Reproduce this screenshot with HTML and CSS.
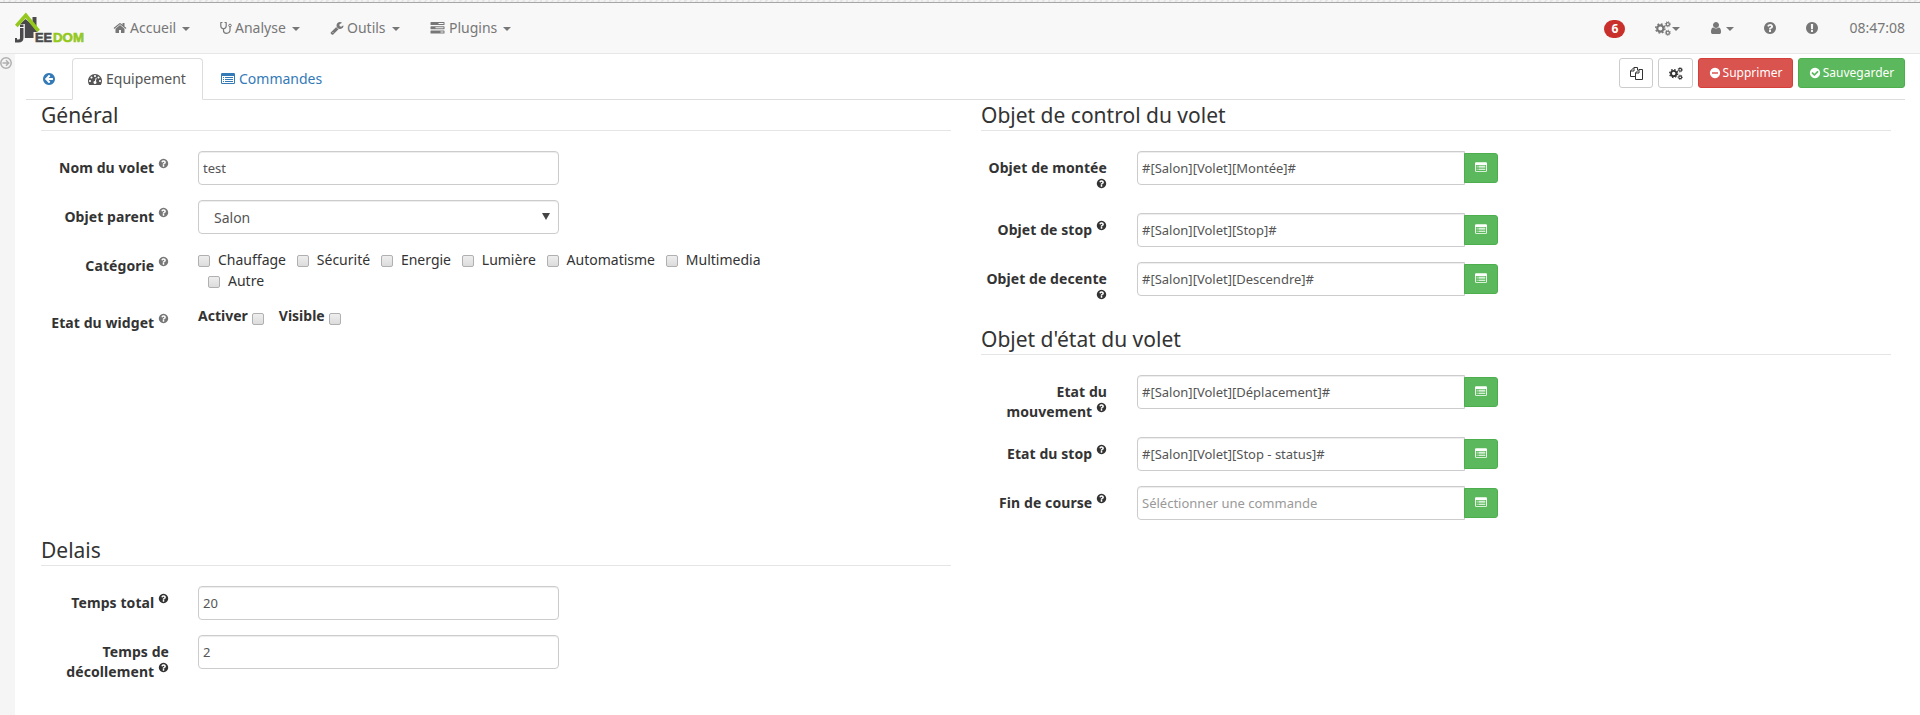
FILE: index.html
```html
<!DOCTYPE html>
<html lang="fr">
<head>
<meta charset="utf-8">
<title>Jeedom</title>
<link rel="stylesheet" href="styles.css">
</head>
<body>
<svg width="0" height="0" class="defs">
  <symbol id="home" viewBox="0 0 1792 1792"><path d="M1472 992v480q0 26-19 45t-45 19h-384v-384h-256v384h-384q-26 0-45-19t-19-45v-480q0-1 .5-3t.5-3l575-474 575 474q1 2 1 6zm223-69l-62 74q-8 9-21 11h-3q-13 0-21-7l-692-577-692 577q-12 8-24 7-13-2-21-11l-62-74q-8-10-7-23.5t11-21.5l719-599q32-26 76-26t76 26l244 204v-195q0-14 9-23t23-9h192q14 0 23 9t9 23v408l219 182q10 8 11 21.5t-7 23.5z"/></symbol>
  <symbol id="user" viewBox="0 0 1792 1792"><path d="M1536 1399q0 109-62.5 187t-150.5 78h-854q-88 0-150.5-78t-62.5-187q0-85 8.5-160.5t31.5-152 58.5-131 94-89 134.500-34.500q131 128 313 128t313-128q76 0 134.500 34.500t94 89 58.500 131 31.500 152 8.500 160.500zm-256-887q0 159-112.500 271.500t-271.500 112.500-271.500-112.500-112.500-271.500 112.500-271.500 271.500-112.500 271.500 112.500 112.500 271.500z"/></symbol>
  <symbol id="question" viewBox="0 0 1792 1792"><path d="M1024 1376v-192q0-14-9-23t-23-9h-192q-14 0-23 9t-9 23v192q0 14 9 23t23 9h192q14 0 23-9t9-23zm256-672q0-88-55.5-163t-138.500-116-170-41q-243 0-371 213-15 24 8 42l132 100q7 6 19 6 16 0 25-12 53-68 86-92 34-24 86-24 48 0 85.500 26t37.500 59q0 38-20 61t-68 45q-63 28-115.500 86.500t-52.500 125.500v36q0 14 9 23t23 9h192q14 0 23-9t9-23q0-19 21.500-49.500t54.500-49.500q32-18 49-28.500t46-35 44.500-48 28-60.500 12.500-81zm384 192q0 209-103 385.500t-279.500 279.500-385.500 103-385.500-103-279.500-279.500-103-385.500 103-385.500 279.500-279.500 385.500-103 385.500 103 279.500 279.500 103 385.500z"/></symbol>
  <symbol id="exclamation" viewBox="0 0 1792 1792"><path d="M896 128q209 0 385.500 103t279.500 279.500 103 385.500-103 385.500-279.500 279.500-385.500 103-385.500-103-279.500-279.500-103-385.500 103-385.500 279.500-279.500 385.500-103zm128 1247v-190q0-14-9-23.500t-22-9.500h-192q-13 0-23 10t-10 23v190q0 13 10 23t23 10h192q13 0 22-9.500t9-23.500zm-2-344l18-621q0-12-10-18-10-8-24-8h-220q-14 0-24 8-10 6-10 18l17 621q0 10 10 17.500t24 7.500h185q14 0 23.500-7.500t10.500-17.500z"/></symbol>
  <symbol id="minus" viewBox="0 0 1792 1792"><path d="M1344 960v-128q0-26-19-45t-45-19h-768q-26 0-45 19t-19 45v128q0 26 19 45t45 19h768q26 0 45-19t19-45zm320-64q0 209-103 385.500t-279.500 279.500-385.500 103-385.500-103-279.500-279.500-103-385.500 103-385.500 279.500-279.500 385.500-103 385.500 103 279.500 279.500 103 385.500z"/></symbol>
  <symbol id="check" viewBox="0 0 1792 1792"><path d="M1412 734q0-28-18-46l-91-90q-19-19-45-19t-45 19l-408 407-226-226q-19-19-45-19t-45 19l-91 90q-18 18-18 46 0 27 18 45l362 362q19 19 45 19 27 0 46-19l543-543q18-18 18-45zm252 162q0 209-103 385.500t-279.500 279.500-385.500 103-385.500-103-279.500-279.500-103-385.500 103-385.500 279.500-279.500 385.500-103 385.500 103 279.500 279.500 103 385.500z"/></symbol>
  <symbol id="wrench" viewBox="0 0 1792 1792"><path d="M448 1472q0-26-19-45t-45-19-45 19-19 45 19 45 45 19 45-19 19-45zm644-420l-682 682q-37 37-90 37-52 0-91-37l-106-108q-38-36-38-90 0-53 38-91l681-681q39 98 114.500 173.500t173.500 114.500zm634-435q0 39-23 106-47 134-164.500 217.500t-258.500 83.500q-185 0-316.500-131.500t-131.500-316.500 131.500-316.500 316.500-131.500q58 0 121.500 16.500t107.500 46.500q16 11 16 28t-16 28l-293 169v224l193 107q5-3 79-48.500t135.500-81 70.500-35.500q15 0 23.500 10t8.500 25z"/></symbol>
  <symbol id="back" viewBox="0 0 1792 1792"><path d="M1408 960v-128q0-26-19-45t-45-19h-502l189-189q19-19 19-45t-19-45l-91-91q-18-18-45-18t-45 18l-362 362-91 91q-18 18-18 45t18 45l91 91 362 362q18 18 45 18t45-18l91-91q18-18 18-45t-18-45l-189-189h502q26 0 45-19t19-45zm256-64q0 209-103 385.500t-279.500 279.500-385.500 103-385.500-103-279.500-279.500-103-385.500 103-385.500 279.500-279.500 385.500-103 385.500 103 279.500 279.500 103 385.500z"/></symbol>
  <symbol id="gauge" viewBox="0 0 1792 1792"><path d="M384 1152q0-53-37.500-90.500t-90.500-37.500-90.500 37.500-37.500 90.500 37.500 90.500 90.500 37.500 90.500-37.500 37.500-90.500zm192-448q0-53-37.500-90.500t-90.500-37.500-90.500 37.500-37.500 90.500 37.500 90.500 90.500 37.500 90.500-37.500 37.500-90.500zm428 481l101-382q6-26-7.500-48.500t-38.500-29.500-48 6.500-30 39.500l-101 382q-60 5-107 43.500t-63 98.500q-20 77 20 146t117 89 146-20 89-117q16-60-6-117t-72-91zm660-33q0-53-37.500-90.500t-90.500-37.500-90.500 37.500-37.500 90.500 37.500 90.500 90.500 37.500 90.500-37.500 37.500-90.500zm-640-640q0-53-37.500-90.500t-90.500-37.500-90.500 37.500-37.500 90.500 37.500 90.500 90.500 37.500 90.500-37.500 37.500-90.500zm448 192q0-53-37.500-90.500t-90.500-37.500-90.500 37.500-37.500 90.500 37.500 90.500 90.500 37.500 90.500-37.500 37.500-90.500zm320 448q0 261-141 483-19 29-54 29h-1402q-35 0-54-29-141-221-141-483 0-182 71-348t191-286 286-191 348-71 348 71 286 191 191 286 71 348z"/></symbol>
  <symbol id="list" viewBox="0 0 14 12"><path fill-rule="evenodd" d="M1.200 0h11.600q1.200 0 1.200 1.200v8.600q0 1.200-1.200 1.200H1.200Q0 11 0 9.800V1.200Q0 0 1.200 0zM1 3v6.700q0 .3.300.3h11.400q.3 0 .3-.3V3zM2 4h1v1H2zM4 4h8v1H4zM2 6h1v1H2zM4 6h8v1H4zM2 8h1v1H2zM4 8h8v1H4z"/></symbol>
  <symbol id="steth" viewBox="0 0 12 14"><path fill="none" stroke="currentColor" stroke-width="1.200" stroke-linecap="round" stroke-linejoin="round" d="M2 1.500H.8V5q0 2.500 2.700 2.800Q6.200 7.500 6.200 5V1.500H5M3.500 8v1.500Q3.500 12.300 6.500 12.300T10 9.500V6"/><circle cx="10" cy="4.500" r="1.300" fill="none" stroke="currentColor"/></symbol>
  <symbol id="tasks" viewBox="0 0 14 12"><path fill-rule="evenodd" d="M.5 0h13q.5 0 .5.500v2q0 .5-.5.500H.5Q0 3 0 2.500v-2Q0 0 .5 0zM8 1v1h5V1zM.5 4.300h13q.5 0 .5.500v2q0 .5-.5.500H.5q-.5 0-.5-.5v-2q0-.5.500-.5zM5 5.300v1h8v-1zM.5 8.600h13q.5 0 .5.500v2q0 .5-.5.500H.5q-.5 0-.5-.5v-2q0-.5.500-.5zM10 9.600v1h3v-1z"/></symbol>
  <symbol id="cogs" viewBox="0 0 15 14"><g fill="none" stroke="currentColor"><circle cx="5" cy="7" r="2.900" stroke-width="2"/><circle cx="5" cy="7" r="4.300" stroke-width="1.400" stroke-dasharray="1.690"/><circle cx="12" cy="3" r="1.500" stroke-width="1.200"/><circle cx="12" cy="3" r="2.400" stroke-width=".9" stroke-dasharray=".94"/><circle cx="12" cy="11" r="1.500" stroke-width="1.200"/><circle cx="12" cy="11" r="2.400" stroke-width=".9" stroke-dasharray=".94"/></g></symbol>
  <symbol id="files" viewBox="0 0 13 13"><path fill="none" stroke="currentColor" d="M5 9.500H.5V4L4 .5h3.500V3M4 .5V4H.5M5.500 6L9 2.500h3.500v10h-7zM9 2.500V6H5.500"/></symbol>
</svg>

<div class="top-edge"></div>
<header class="navbar">
  <svg class="logo" viewBox="0 0 70 32" width="70" height="32">
    <path fill="#4a4a4c" d="M17.500 5h4v10l-4-3zM10.500 7L22 16.500V20h-3.500v6H9.800V12H5z"/>
    <path fill="#4a4a4c" d="M5 16h3.500v9.500q0 5-5 5H0V26h2v1.500h1.500Q5 27.500 5 26zM5 12.500h3.500v2.500H5z"/>
    <path fill="none" stroke="#94c81e" stroke-width="3.600" d="M1.300 14L10.800 3.300 23.500 19"/>
    <text x="20" y="30.200" textLength="17" lengthAdjust="spacingAndGlyphs" fill="#4a4a4c" stroke="#4a4a4c">EE</text>
    <text x="38" y="30.200" textLength="31" lengthAdjust="spacingAndGlyphs" fill="#94c81e" stroke="#94c81e">DOM</text>
  </svg>
  <nav class="menu">
    <a class="item accueil"><svg class="ico"><use href="#home"/></svg>Accueil<i class="caret"></i></a>
    <a class="item analyse"><svg class="ico steth"><use href="#steth"/></svg>Analyse<i class="caret"></i></a>
    <a class="item outils"><svg class="ico"><use href="#wrench"/></svg>Outils<i class="caret"></i></a>
    <a class="item"><svg class="ico tasks"><use href="#tasks"/></svg>Plugins<i class="caret"></i></a>
  </nav>
  <div class="status">
    <span class="badge">6</span>
    <a class="item s-cogs"><svg class="ico cogs"><use href="#cogs"/></svg><i class="caret"></i></a>
    <a class="item s-user"><svg class="ico"><use href="#user"/></svg><i class="caret"></i></a>
    <a class="item s-help"><svg class="ico"><use href="#question"/></svg></a>
    <a class="item s-warn"><svg class="ico"><use href="#exclamation"/></svg></a>
    <span class="clock">08:47:08</span>
  </div>
</header>

<div class="page">
  <aside class="rail"><svg width="12" height="12" viewBox="0 0 12 12"><g fill="none" stroke="#b0b0b0" stroke-width="1.500"><circle cx="6" cy="6" r="5.200"/><path d="M2.500 6H8.500M6 3.300L8.700 6 6 8.700"/></g></svg></aside>
  <main class="content">
    <div class="tabs">
      <a class="tab back"><svg class="ico14"><use href="#back"/></svg></a>
      <a class="tab active"><svg class="ico14"><use href="#gauge"/></svg>Equipement</a>
      <a class="tab commands"><svg class="ico-list"><use href="#list"/></svg>Commandes</a>
      <div class="actions">
        <button class="btn copy"><svg width="13" height="13"><use href="#files"/></svg></button>
        <button class="btn conf"><svg width="14" height="13"><use href="#cogs"/></svg></button>
        <button class="btn danger"><svg class="ico-btn"><use href="#minus"/></svg>Supprimer</button>
        <button class="btn success"><svg class="ico-btn"><use href="#check"/></svg>Sauvegarder</button>
      </div>
    </div>
    <div class="columns">
      <section class="col left">
        <form class="general">
          <h2>Général</h2>
          <div class="row"><label>Nom du volet <svg class="help soft"><use href="#question"/></svg></label><input class="field" value="test"></div>
          <div class="row"><label>Objet parent <svg class="help soft"><use href="#question"/></svg></label><div class="field select">Salon<span class="arrow"></span></div></div>
          <div class="row cat"><label>Catégorie <svg class="help soft"><use href="#question"/></svg></label>
            <div class="checks">
              <span class="opt"><i class="box"></i>Chauffage</span><span class="opt"><i class="box"></i>Sécurité</span><span class="opt"><i class="box"></i>Energie</span><span class="opt"><i class="box"></i>Lumière</span><span class="opt"><i class="box"></i>Automatisme</span><span class="opt"><i class="box"></i>Multimedia</span><span class="opt second"><i class="box"></i>Autre</span>
            </div>
          </div>
          <div class="row"><label>Etat du widget <svg class="help soft"><use href="#question"/></svg></label>
            <div class="flags"><span>Activer<i class="box"></i></span><span>Visible<i class="box"></i></span></div>
          </div>
        </form>
        <form>
          <h2>Delais</h2>
          <div class="row"><label>Temps total <svg class="help"><use href="#question"/></svg></label><input class="field" value="20"></div>
          <div class="row"><label>Temps de décollement <svg class="help"><use href="#question"/></svg></label><input class="field" value="2"></div>
        </form>
      </section>
      <section class="col">
        <form>
          <h2>Objet de control du volet</h2>
          <div class="row"><label>Objet de montée <svg class="help"><use href="#question"/></svg></label><div class="group"><input value="#[Salon][Volet][Montée]#"><button class="pick" type="button"><svg><use href="#list"/></svg></button></div></div>
          <div class="row"><label>Objet de stop <svg class="help"><use href="#question"/></svg></label><div class="group"><input value="#[Salon][Volet][Stop]#"><button class="pick" type="button"><svg><use href="#list"/></svg></button></div></div>
          <div class="row"><label>Objet de decente <svg class="help"><use href="#question"/></svg></label><div class="group"><input value="#[Salon][Volet][Descendre]#"><button class="pick" type="button"><svg><use href="#list"/></svg></button></div></div>
        </form>
        <form>
          <h2>Objet d'état du volet</h2>
          <div class="row"><label>Etat du mouvement <svg class="help"><use href="#question"/></svg></label><div class="group"><input value="#[Salon][Volet][Déplacement]#"><button class="pick" type="button"><svg><use href="#list"/></svg></button></div></div>
          <div class="row"><label>Etat du stop <svg class="help"><use href="#question"/></svg></label><div class="group"><input value="#[Salon][Volet][Stop - status]#"><button class="pick" type="button"><svg><use href="#list"/></svg></button></div></div>
          <div class="row"><label>Fin de course <svg class="help"><use href="#question"/></svg></label><div class="group"><input placeholder="Séléctionner une commande"><button class="pick" type="button"><svg><use href="#list"/></svg></button></div></div>
        </form>
      </section>
    </div>
  </main>
</div>
</body>
</html>
```
FILE: styles.css
```css
* { box-sizing: border-box; }
body { margin: 0; height: 715px; overflow: hidden; display: flex; flex-direction: column; background: #fff; color: #333; font: 14px/20px "Noto Sans", sans-serif; }
svg { fill: currentColor; flex: none; }
.defs { position: absolute; }
.top-edge { height: 3px; flex: none; background: repeating-linear-gradient(120deg, #f3f3f3 0 3px, #e6e6e6 3px 5px); border-bottom: 1px solid #a6a6a6; }
.navbar { height: 51px; flex: none; display: flex; align-items: flex-start; background: #f8f8f8; border-bottom: 1px solid #e7e7e7; color: #777; padding-left: 15px; }
.logo { margin-top: 9px; font: bold 13px "Liberation Sans", sans-serif; }
.logo text { stroke-width: .6px; }
.menu { display: flex; padding: 15px 0 0 28px; }
.item { display: flex; align-items: center; height: 20px; }
.ico { width: 14px; height: 14px; margin-right: 3px; }
.steth { width: 12px; }
.tasks { width: 15px; height: 12px; margin-right: 4px; }
.caret { border: 4px solid transparent; border-top-color: currentColor; border-bottom: 0; margin-left: 6px; margin-top: 2px; }
.accueil { width: 107px; }
.analyse { width: 110px; }
.outils { width: 100px; }
.status { margin-left: auto; display: flex; padding-top: 15px; padding-right: 15px; }
.badge { width: 21px; height: 18px; margin: 2px 30px 0 0; border-radius: 9px; background: #c9302c; color: #fff; font-weight: bold; font-size: 12px; line-height: 17px; text-align: center; }
.s-cogs { width: 54px; }
.s-cogs .ico { width: 16px; height: 15px; margin: 0; }
.s-cogs .caret { margin-left: 1px; }
.s-user { width: 54px; }
.s-user .ico { margin: 0; }
.s-user .caret { margin-left: 3px; }
.s-help { width: 42px; }
.s-warn { width: 44px; }
.page { flex: 1; display: flex; }
.rail { width: 15px; background: #f5f5f5; padding-top: 3px; }
.rail svg { display: block; }
.content { flex: 1; padding: 4px 15px 0 11px; }
.tabs { height: 42px; display: flex; border-bottom: 1px solid #ddd; color: #337ab7; }
.tab { display: flex; align-items: center; height: 42px; padding: 0 15px; border: 1px solid transparent; }
.ico14 { width: 14px; height: 14px; }
.back { width: 46px; }
.active { width: 131px; color: #555; background: #fff; border-color: #ddd #ddd #fff; border-radius: 4px 4px 0 0; }
.active svg { margin-right: 4px; }
.commands { padding-left: 17px; }
.ico-list { width: 14px; height: 12px; margin-right: 4px; }
.actions { margin-left: auto; display: flex; gap: 5px; }
.btn { height: 30px; display: flex; align-items: center; justify-content: center; padding: 0; border: 1px solid #ccc; border-radius: 3px; background: #fff; color: #333; font: 12px/18px "Noto Sans", sans-serif; }
.copy { width: 34px; }
.conf { width: 35px; }
.danger { width: 95px; background: #d9534f; border-color: #d43f3a; color: #fff; }
.success { width: 107px; background: #5cb85c; border-color: #4cae4c; color: #fff; }
.ico-btn { width: 12px; height: 12px; margin-right: 2px; }
.columns { display: flex; gap: 30px; padding-left: 15px; }
.col { width: 910px; }
h2 { margin: 0 0 20px; height: 31px; border-bottom: 1px solid #e5e5e5; font: 21px/30px "Noto Sans", sans-serif; }
.general { height: 435px; }
.row { display: flex; margin-bottom: 15px; }
.row label { width: 126px; padding-top: 7px; font-weight: bold; letter-spacing: .08px; text-align: right; }
.left .row label { width: 128px; }
.help { width: 11px; height: 11px; vertical-align: 4px; }
.soft { color: #777; }
.field { width: 361px; height: 34px; margin-left: 29px; }
input, .select { border: 1px solid #ccc; border-radius: 4px; background: #fff; box-shadow: inset 0 1px 1px rgba(0,0,0,.075); color: #555; font: 13px "Noto Sans", sans-serif; padding: 0 4px; }
input::placeholder { color: #999; }
.select { display: flex; align-items: center; justify-content: space-between; font-size: 14px; padding: 1px 8px 0 15px; }
.arrow { border: 4px solid transparent; border-top: 7px solid #444; border-bottom: 0; margin-top: -2px; }
.cat { height: 42px; }
.checks { display: flex; flex-wrap: wrap; width: 600px; margin-left: 29px; align-content: flex-start; }
.opt { display: flex; height: 21px; align-items: center; margin-right: 10.8px; }
.second { margin-left: 10px; }
.box { width: 12px; height: 12px; margin: 2px 8px 0 0; border: 1px solid #b0b0b0; border-radius: 2px; background: linear-gradient(#eee, #dcdcdc); }
.flags { display: flex; gap: 15px; margin-left: 29px; font-weight: bold; }
.flags span { display: flex; height: 20px; align-items: center; }
.flags .box { margin: 5px 0 0 4px; }
.group { display: flex; align-items: flex-start; margin-left: 30px; }
.group input { width: 328px; height: 34px; border-radius: 4px 0 0 4px; }
.pick { width: 34px; height: 30px; margin: 2px 0 0 -1px; padding: 0 0 2px; border: 1px solid #4cae4c; border-radius: 0 3px 3px 0; background: #5cb85c; color: #fff; display: flex; align-items: center; justify-content: center; }
.pick svg { width: 12px; height: 11px; }
```
